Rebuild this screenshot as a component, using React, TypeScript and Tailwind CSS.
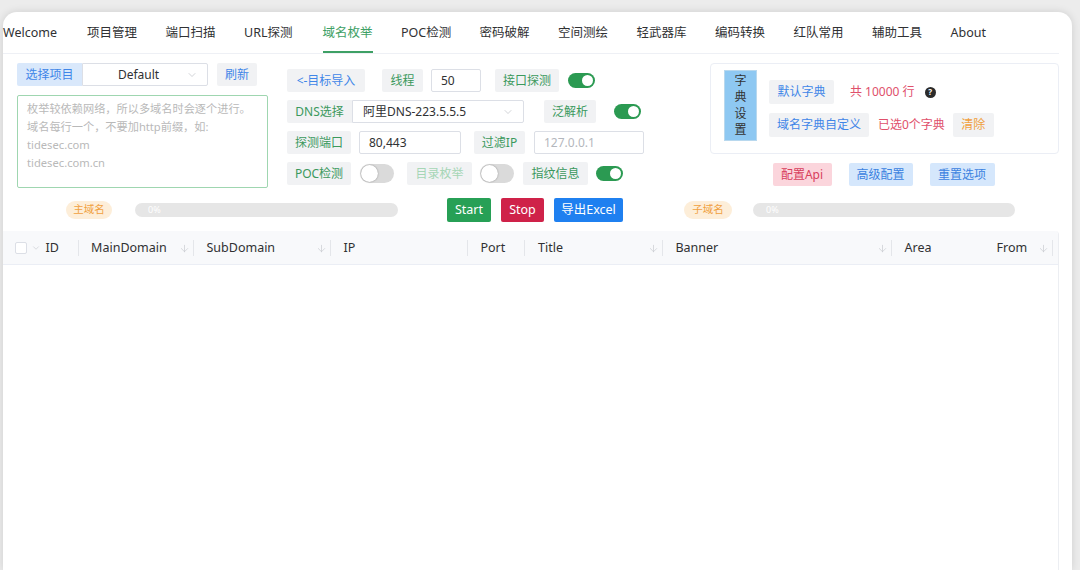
import { ChevronDown, ArrowDown } from 'lucide-react'

const tabs = [
  'Welcome',
  '项目管理',
  '端口扫描',
  'URL探测',
  '域名枚举',
  'POC检测',
  '密码破解',
  '空间测绘',
  '轻武器库',
  '编码转换',
  '红队常用',
  '辅助工具',
  'About',
]

function Label({ className, dim, children }: { className: string; dim?: boolean; children: React.ReactNode }) {
  return (
    <div
      className={`h-[23px] shrink-0 flex items-center justify-center rounded-[2px] bg-[#f1f2f4] text-[12px] ${
        dim ? 'text-[#a6d6b6]' : 'text-[#3b995d]'
      } ${className}`}
    >
      {children}
    </div>
  )
}

function Toggle({ on }: { on?: boolean }) {
  if (on)
    return (
      <div className="w-[27px] h-[15px] shrink-0 rounded-full bg-[#2b9a52] flex items-center justify-end px-[2px]">
        <div className="w-[11px] h-[11px] rounded-full bg-white" />
      </div>
    )
  return (
    <div className="w-[34px] h-[19px] shrink-0 rounded-full bg-[#dadada] flex items-center px-[1px]">
      <div className="w-[17px] h-[17px] rounded-full bg-white shadow-[0_0_1.5px_rgba(0,0,0,0.45)]" />
    </div>
  )
}

function Input({ className, value, placeholder }: { className: string; value?: string; placeholder?: string }) {
  return (
    <div
      className={`h-[23px] shrink-0 flex items-center pl-[9px] border border-[#dcdfe6] rounded-[2px] text-[12px] ${
        value ? 'text-[#303133]' : 'text-[#b4b7bd]'
      } ${className}`}
    >
      {value ?? placeholder}
    </div>
  )
}

function HeadCell({
  className,
  title,
  sort,
  sep = true,
}: {
  className: string
  title: string
  sort?: boolean
  sep?: boolean
}) {
  return (
    <div className={`h-full shrink-0 flex items-center pl-[12.5px] ${className}`}>
      <span className="flex-1">{title}</span>
      {sort && <ArrowDown size={11} strokeWidth={1.4} className="text-[#c3c6cc] mr-[3px]" />}
      {sep && <div className="w-px h-[16px] bg-[#e4e6ea]" />}
    </div>
  )
}

export default function App() {
  return (
    <div className="h-[570px] overflow-hidden bg-[#ececec] pt-[12px] pl-[3px] font-['Noto_Sans','Noto_Sans_CJK_SC',sans-serif]">
      <div className="w-[1069px] h-[558px] bg-white rounded-t-[14px] shadow-[0_0_9px_rgba(0,0,0,0.13)] pr-[13px] flex flex-col">
        {/* tabs */}
        <div className="h-[42px] flex border-b border-[#eef0f5] text-[12.5px] text-[#303133]">
          {tabs.map((t, i) => (
            <div key={t} className={`shrink-0 flex ${i === 0 ? 'w-[84px]' : 'w-[78.5px]'}`}>
              <span
                className={`h-full flex items-center pt-[4px] -mb-px border-b-2 ${
                  t === '域名枚举' ? 'border-[#3ea065] text-[#3ea065]' : 'border-transparent'
                }`}
              >
                {t}
              </span>
            </div>
          ))}
        </div>

        {/* top form */}
        <div className="flex items-start mt-[9px]">
          {/* left */}
          <div className="ml-[14px] w-[251px] shrink-0">
            <div className="flex h-[23px]">
              <div className="w-[65px] shrink-0 flex items-center justify-center bg-[#d9e8fb] text-[#3f86e8] text-[12px] rounded-l-[2px]">
                选择项目
              </div>
              <div className="w-[126px] shrink-0 flex items-center border border-[#dcdfe6] text-[12px] text-[#303133] rounded-r-[2px]">
                <span className="flex-1 text-center pl-[8px]">Default</span>
                <ChevronDown size={12} strokeWidth={1.3} className="text-[#b9bcc2] mr-[9px]" />
              </div>
              <div className="ml-[9px] w-[40px] shrink-0 flex items-center justify-center bg-[#f1f2f4] text-[#3f86e8] text-[12px] rounded-[2px]">
                刷新
              </div>
            </div>
            <div className="mt-[9px] h-[93px] border border-[#9fd6b0] rounded-[2px] pl-[9px] pt-[4px] text-[11.2px] leading-[18px] text-[#b9b9b9] whitespace-pre-line">
              {'枚举较依赖网络，所以多域名时会逐个进行。\n域名每行一个，不要加http前缀，如:\ntidesec.com\ntidesec.com.cn'}
            </div>
          </div>

          {/* middle */}
          <div className="ml-[19px] pt-[6px] flex flex-col gap-[8px]">
            <div className="flex items-center h-[23px]">
              <div className="w-[78px] h-[23px] shrink-0 flex items-center justify-center rounded-[2px] bg-[#f1f2f4] text-[12px] text-[#3f86e8]">
                &lt;-目标导入
              </div>
              <Label className="ml-[17px] w-[41px]">线程</Label>
              <Input className="ml-[8px] w-[50px]" value="50" />
              <Label className="ml-[14px] w-[64px]">接口探测</Label>
              <div className="ml-[9px]">
                <Toggle on />
              </div>
            </div>
            <div className="flex items-center h-[23px]">
              <Label className="w-[65px] rounded-r-none">DNS选择</Label>
              <div className="w-[172px] h-[23px] shrink-0 flex items-center border border-[#dcdfe6] rounded-r-[2px] pl-[10px] text-[12px] text-[#303133]">
                <span className="flex-1">阿里DNS-223.5.5.5</span>
                <ChevronDown size={12} strokeWidth={1.3} className="text-[#b9bcc2] mr-[9px]" />
              </div>
              <Label className="ml-[20px] w-[52px]">泛解析</Label>
              <div className="ml-[18px]">
                <Toggle on />
              </div>
            </div>
            <div className="flex items-center h-[23px]">
              <Label className="w-[64px]">探测端口</Label>
              <Input className="ml-[8px] w-[102px]" value="80,443" />
              <Label className="ml-[13px] w-[51px]">过滤IP</Label>
              <Input className="ml-[9px] w-[110px]" placeholder="127.0.0.1" />
            </div>
            <div className="flex items-center h-[23px]">
              <Label className="w-[64px]">POC检测</Label>
              <div className="ml-[9px]">
                <Toggle />
              </div>
              <Label className="ml-[13px] w-[65px]" dim>
                目录枚举
              </Label>
              <div className="ml-[8px]">
                <Toggle />
              </div>
              <Label className="ml-[9px] w-[65px]">指纹信息</Label>
              <div className="ml-[8px]">
                <Toggle on />
              </div>
            </div>
          </div>

          {/* right */}
          <div className="ml-auto w-[349px] shrink-0">
            <div className="h-[91px] border border-[#ebeef5] rounded-[4px] flex items-start pl-[13px]">
              <div className="mt-[6px] w-[33px] h-[71px] shrink-0 bg-[#8ec8f2] border border-[#b8d8ee] flex flex-col items-center justify-center text-[12px] leading-[16.5px] text-[#333]">
                <span>字</span>
                <span>典</span>
                <span>设</span>
                <span>置</span>
              </div>
              <div className="ml-[12px] mt-[16px] flex flex-col gap-[9px]">
                <div className="flex items-center h-[24px]">
                  <div className="w-[65px] h-[24px] flex items-center justify-center rounded-[2px] bg-[#f1f2f4] text-[12px] text-[#3f86e8]">
                    默认字典
                  </div>
                  <span className="ml-[16px] text-[12px] text-[#e0506b]">共 10000 行</span>
                  <div className="ml-[10px] w-[11px] h-[11px] rounded-full bg-[#2b2b2b] flex items-center justify-center text-white text-[8px] font-bold leading-none">
                    ?
                  </div>
                </div>
                <div className="flex items-center h-[24px]">
                  <div className="w-[100px] h-[24px] flex items-center justify-center rounded-[2px] bg-[#f1f2f4] text-[12px] text-[#3f86e8]">
                    域名字典自定义
                  </div>
                  <span className="ml-[9px] text-[12px] text-[#e0506b]">已选0个字典</span>
                  <div className="ml-[8px] w-[41px] h-[24px] flex items-center justify-center rounded-[2px] bg-[#f1f2f4] text-[12px] text-[#f0a03c]">
                    清除
                  </div>
                </div>
              </div>
            </div>
            <div className="mt-[9px] flex justify-center gap-[17px] pr-[2px]">
              <div className="w-[59px] h-[23px] flex items-center justify-center rounded-[2px] bg-[#fbd5dc] text-[12px] text-[#d8405c]">
                配置Api
              </div>
              <div className="w-[64px] h-[23px] flex items-center justify-center rounded-[2px] bg-[#d5e7fc] text-[12px] text-[#3b82e0]">
                高级配置
              </div>
              <div className="w-[65px] h-[23px] flex items-center justify-center rounded-[2px] bg-[#d5e7fc] text-[12px] text-[#3b82e0]">
                重置选项
              </div>
            </div>
          </div>
        </div>

        {/* progress row */}
        <div className="mt-[10px] h-[24px] flex items-center">
          <div className="ml-[63px] w-[46px] h-[18px] shrink-0 rounded-full bg-[#fdeed9] text-[#f0a040] text-[10.5px] flex items-center justify-center">
            主域名
          </div>
          <div className="ml-[23px] w-[263px] h-[14px] shrink-0 rounded-full bg-[#e6e6e6] flex items-center pl-[13px] text-[9px] text-white">
            0%
          </div>
          <div className="ml-[49px] w-[44px] h-[24px] shrink-0 rounded-[2px] bg-[#27a056] text-white text-[12.5px] flex items-center justify-center">
            Start
          </div>
          <div className="ml-[10px] w-[43px] h-[24px] shrink-0 rounded-[2px] bg-[#cf2249] text-white text-[12.5px] flex items-center justify-center">
            Stop
          </div>
          <div className="ml-[10px] w-[69px] h-[24px] shrink-0 rounded-[2px] bg-[#1f80f0] text-white text-[12.5px] flex items-center justify-center">
            导出Excel
          </div>
          <div className="ml-[61px] w-[48px] h-[18px] shrink-0 rounded-full bg-[#fdeed9] text-[#f0a040] text-[10.5px] flex items-center justify-center">
            子域名
          </div>
          <div className="ml-[21px] w-[262px] h-[14px] shrink-0 rounded-full bg-[#e6e6e6] flex items-center pl-[13px] text-[9px] text-white">
            0%
          </div>
        </div>

        {/* table */}
        <div className="mt-[9px] flex-1 flex flex-col border-r border-[#eceef2] rounded-tr-[4px]">
          <div className="h-[34px] flex items-center pt-[1px] bg-[#f8f9fb] border-b border-[#ebeef5] text-[12.5px] text-[#303133] rounded-tr-[4px]">
            <div className="h-full w-[75.6px] shrink-0 flex items-center pl-[11.5px]">
              <div className="w-[12px] h-[12px] border border-[#dcdfe6] rounded-[2px] bg-white" />
              <ChevronDown size={10} strokeWidth={1.4} className="ml-[4px] text-[#c3c6cc]" />
              <span className="ml-[5px] flex-1">ID</span>
              <div className="w-px h-[16px] bg-[#e4e6ea]" />
            </div>
            <HeadCell className="w-[115.4px]" title="MainDomain" sort />
            <HeadCell className="w-[137px]" title="SubDomain" sort />
            <HeadCell className="w-[137px]" title="IP" />
            <HeadCell className="w-[57.5px]" title="Port" />
            <HeadCell className="w-[137.5px]" title="Title" sort />
            <HeadCell className="w-[229px]" title="Banner" sort />
            <HeadCell className="w-[92px]" title="Area" sep={false} />
            <HeadCell className="w-[69px]" title="From" sort />
          </div>
          <div className="flex-1 bg-white" />
        </div>
      </div>
    </div>
  )
}
